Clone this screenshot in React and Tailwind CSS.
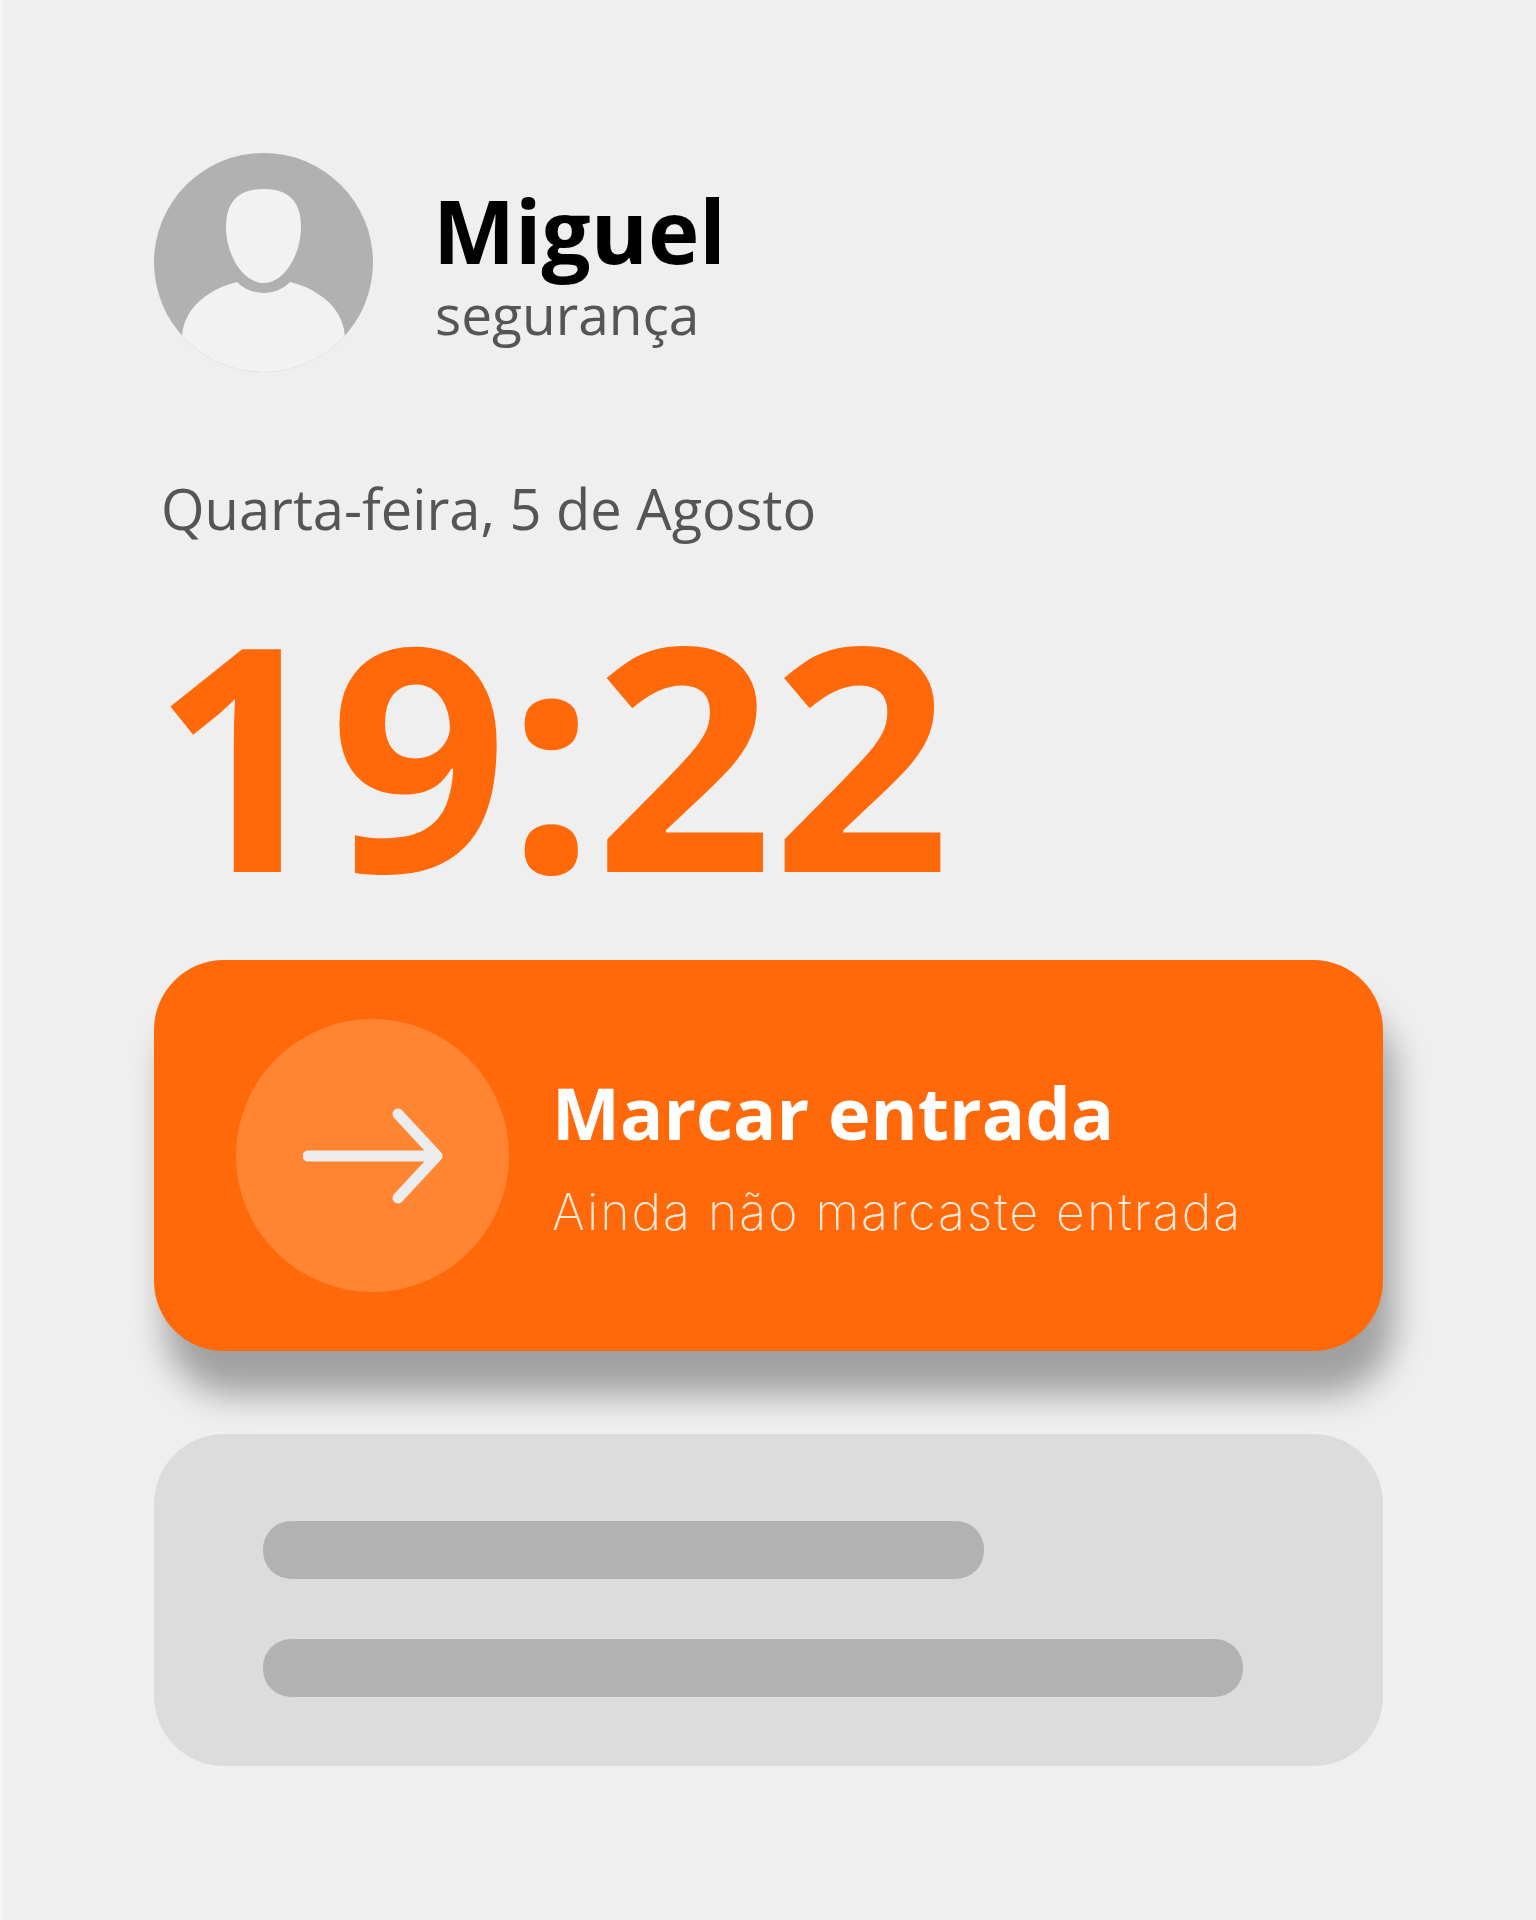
const openSans = { fontFamily: '"Open Sans", sans-serif' }

function Avatar() {
  return (
    <svg width="219" height="219" viewBox="0 0 219 219" className="shrink-0">
      <defs>
        <clipPath id="avatar-clip">
          <circle cx="109.5" cy="109.5" r="109.5" />
        </clipPath>
      </defs>
      <circle cx="109.5" cy="109.5" r="109.5" fill="#b1b1b1" />
      <g clipPath="url(#avatar-clip)" fill="#f2f2f2">
        <path d="M109.5 36 C134 36 147 48 147 74 C147 102 130 130 109.5 130 C89 130 72 102 72 74 C72 48 85 36 109.5 36 Z" />
        <path d="M83 129 C90 136 99 140 109.5 140 C120 140 129 136 136 129 C168 137 191 158 191 186 L191 219 L28 219 L28 186 C28 158 51 137 83 129 Z" />
      </g>
    </svg>
  )
}

function ArrowIcon() {
  return (
    <svg width="140" height="100" viewBox="0 0 140 100" fill="none" stroke="#ececec" strokeWidth="11" strokeLinecap="round" strokeLinejoin="round">
      <path d="M5 50 H133" />
      <path d="M95 8 L134 50 L95 92" />
    </svg>
  )
}

export default function App() {
  return (
    <div className="w-[1536px] h-[1920px] bg-[#efefef] border-l-[2px] border-[#f6f6f6] pl-[152px] pt-[153px] overflow-hidden" style={openSans}>
      <div className="flex items-center gap-[60px]">
        <Avatar />
        <div className="flex flex-col pt-[5px]">
          <span className="text-[87px] leading-[92px] font-bold text-black">Miguel</span>
          <span className="mt-[5px] ml-[2px] text-[55px] leading-[66px] text-[#555555]">segurança</span>
        </div>
      </div>

      <div className="mt-[96px] ml-[7px] text-[56px] leading-[80px] text-[#555555]">Quarta-feira, 5 de Agosto</div>

      <div className="mt-[38px] ml-[-2px] text-[312px] leading-[330px] font-bold text-[#ff690a] tracking-[-1px]">19:22</div>

      <button className="mt-[44px] w-[1229px] h-[391px] rounded-[70px] bg-[#ff690a] shadow-[11px_44px_34px_rgba(0,0,0,0.33)] flex items-center pl-[82px] text-left">
        <div className="w-[273px] h-[273px] rounded-full bg-[#ff8533] flex items-center justify-center shrink-0">
          <ArrowIcon />
        </div>
        <div className="flex flex-col ml-[43px]">
          <span className="text-[72px] leading-[84px] font-bold text-white">Marcar entrada</span>
          <span className="mt-[28px] text-[50px] leading-[60px] font-extralight text-[#ffe9da] tracking-[2px]" style={{ fontFamily: 'Inter, sans-serif' }}>Ainda não marcaste entrada</span>
        </div>
      </button>

      <div className="mt-[83px] w-[1229px] h-[332px] rounded-[70px] bg-[#dcdcdc] pl-[109px] pt-[87px] flex flex-col gap-[60px]">
        <div className="w-[721px] h-[58px] rounded-[28px] bg-[#b2b2b2]" />
        <div className="w-[980px] h-[58px] rounded-[28px] bg-[#b2b2b2]" />
      </div>
    </div>
  )
}
